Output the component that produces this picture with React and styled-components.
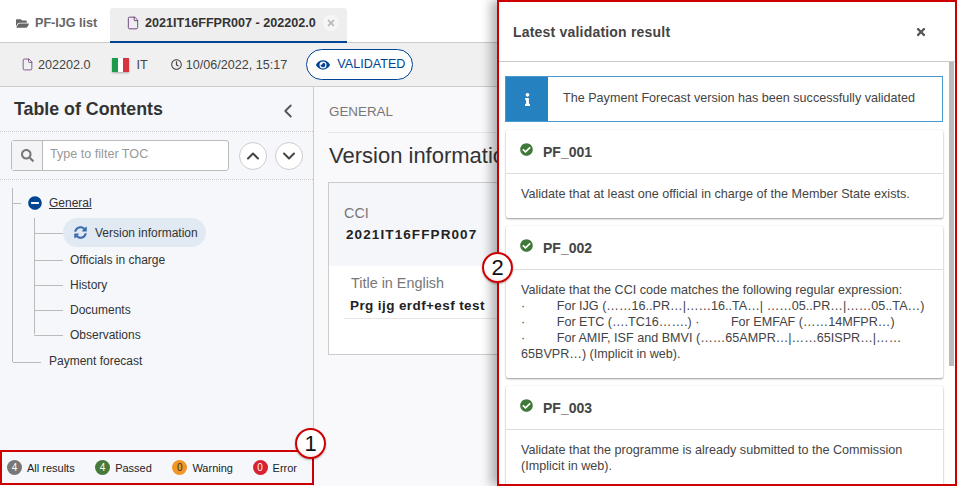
import React from "react";
import styled, { createGlobalStyle } from "styled-components";
import {
  FaFolderOpen,
  FaRegClock,
  FaEye,
  FaSearch,
  FaSyncAlt,
  FaMinusCircle,
  FaCheckCircle,
  FaInfo,
  FaTimes,
} from "react-icons/fa";
import { File, ChevronUp, ChevronDown, ChevronLeft } from "lucide-react";

const GlobalStyle = createGlobalStyle`
  html, body { margin: 0; padding: 0; background: #fff; }
  * { box-sizing: border-box; }
  body { font-family: "Liberation Sans", Arial, sans-serif; color: #333; }
`;

const Page = styled.div`
  position: relative;
  width: 957px;
  height: 486px;
  overflow: hidden;
  display: flex;
  flex-direction: column;
`;

const Tabs = styled.div`
  height: 43px;
  flex: none;
  display: flex;
  align-items: flex-end;
  padding-left: 16px;
  border-bottom: 1px solid #ccc;
`;

const ListTab = styled.div`
  display: flex;
  align-items: center;
  gap: 6px;
  height: 35px;
  width: 94px;
  padding-bottom: 3px;
  font-size: 12.6px;
  font-weight: 700;
  color: #666;
  svg { font-size: 13px; }
`;

const ActiveTab = styled.div`
  display: flex;
  align-items: center;
  width: 237px;
  height: 35px;
  padding: 0 7px 3px 16px;
  margin-bottom: -1px;
  background: #eee;
  border-bottom: 2px solid #004494;
  border-radius: 3px 3px 0 0;
  font-size: 12.6px;
  font-weight: 700;
  color: #333;
  white-space: nowrap;
  svg { color: #6a3b7a; margin-right: 5px; flex: none; }
`;

const TabClose = styled.span`
  width: 16px;
  height: 16px;
  margin-left: 7px;
  border-radius: 50%;
  background: #f6f6f6;
  display: flex;
  align-items: center;
  justify-content: center;
  svg { color: #bbb; font-size: 10px; margin: 0; }
`;

const Toolbar = styled.div`
  height: 44px;
  flex: none;
  display: flex;
  align-items: center;
  padding-left: 21px;
  background: #f0f0f0;
  border-bottom: 1px solid #ccc;
  font-size: 12.6px;
  color: #444;
`;

const Meta = styled.span`
  display: flex;
  align-items: center;
  gap: ${(p) => p.$gap || 4}px;
  margin-right: ${(p) => p.$after}px;
  svg { font-size: 11px; flex: none; }
`;

const Flag = styled.span`
  width: 17px;
  height: 14px;
  background: linear-gradient(90deg, #1e9a4b 0 33%, #fff 33% 66%, #d8343f 66%);
  box-shadow: 0 1px 2px rgba(0, 0, 0, 0.3);
`;

const StatusPill = styled.span`
  display: flex;
  align-items: center;
  gap: 7px;
  width: 107px;
  height: 31px;
  padding: 0 0 2px 9px;
  background: #fff;
  border: 1px solid #004494;
  border-radius: 16px;
  color: #004494;
  font-size: 12.6px;
  svg { font-size: 14px; margin-top: 3px; }
`;

const Main = styled.div`
  flex: 1;
  min-height: 0;
  display: flex;
`;

const Sidebar = styled.aside`
  width: 314px;
  flex: none;
  display: flex;
  flex-direction: column;
  background: #f6f7fb;
  border-right: 1px solid #ccc;
`;

const SidebarHead = styled.div`
  height: 45px;
  flex: none;
  display: flex;
  align-items: center;
  justify-content: space-between;
  padding: 0 14px;
  border-bottom: 1px dotted #ccc;
  h2 { margin: 0; font-size: 17.8px; font-weight: 700; color: #333; }
  svg { color: #555; margin-top: 4px; }
`;

const FilterRow = styled.div`
  height: 48px;
  flex: none;
  display: flex;
  align-items: center;
  padding-left: 11px;
  border-bottom: 1px dotted #ccc;
`;

const SearchBox = styled.div`
  width: 218px;
  height: 31px;
  display: flex;
  margin-right: 10px;
  background: #fff;
  border: 1px solid #bbb;
  border-radius: 3px;
`;

const SearchIcon = styled.span`
  width: 31px;
  display: flex;
  align-items: center;
  justify-content: center;
  background: #f4f4f6;
  border-right: 1px solid #bbb;
  svg { font-size: 13px; color: #777; }
`;

const SearchText = styled.span`
  padding-left: 7px;
  line-height: 27px;
  font-size: 12.6px;
  color: #999;
`;

const RoundButton = styled.span`
  width: 28px;
  height: 28px;
  margin-right: 8px;
  display: flex;
  align-items: center;
  justify-content: center;
  background: #fff;
  border: 1px solid #ccc;
  border-radius: 50%;
  svg { color: #444; }
`;

const Tree = styled.div`
  flex: 1;
  position: relative;
  padding: 8px 0 0 12px;
  font-size: 12px;
  color: #333;
`;

const TreeRoot = styled.div`
  border-left: 1px solid #bbb;
  height: 174px;
`;

const TreeRow = styled.div`
  position: relative;
  display: flex;
  align-items: center;
  height: ${(p) => p.$h || 25}px;
  padding-left: ${(p) => p.$pad}px;
  padding-bottom: ${(p) => p.$lift || 0}px;
  &::before {
    content: "";
    position: absolute;
    left: 0;
    top: 50%;
    width: ${(p) => p.$line}px;
    border-top: 1px solid #bbb;
  }
`;

const GeneralLink = styled.span`
  text-decoration: underline;
  margin-left: 7px;
`;

const GeneralIcon = styled(FaMinusCircle)`
  font-size: 14px;
  color: #004494;
`;

const SubTree = styled.div`
  position: relative;
  margin-left: 21px;
  height: 129px;
  &::after {
    content: "";
    position: absolute;
    left: 0;
    top: 0;
    bottom: 13px;
    border-left: 1px solid #bbb;
  }
`;

const ActivePill = styled.span`
  display: flex;
  align-items: center;
  gap: 8px;
  height: 29px;
  width: 143px;
  padding-left: 11px;
  background: #e1e9f3;
  border-radius: 15px;
  svg { font-size: 13px; color: #3d6cb0; }
`;

const Legend = styled.div`
  height: 35px;
  flex: none;
  display: flex;
  align-items: center;
  padding-left: 5px;
  margin: 0 -1px 1px 0;
  border: 2px solid #c00;
  font-size: 11px;
  color: #222;
`;

const LegendItem = styled.span`
  display: flex;
  align-items: center;
  gap: 5px;
  width: ${(p) => p.$w}px;
`;

const Count = styled.span`
  width: 15px;
  height: 15px;
  border-radius: 50%;
  background: ${(p) => p.$color};
  color: ${(p) => p.$text || "#fff"};
  display: flex;
  align-items: center;
  justify-content: center;
  font-size: 10px;
`;

const Content = styled.div`
  flex: 1;
  min-width: 0;
  overflow: hidden;
  padding: 0 0 0 14px;
  background: #f9f9fb;
`;

const Crumb = styled.div`
  width: 400px;
  height: 46px;
  padding: 17px 0 0 1px;
  border-bottom: 1px solid #e6e6e6;
  font-size: 13.4px;
  color: #777;
`;

const Heading = styled.h1`
  margin: 9px 0 0;
  padding-left: 1px;
  height: 40px;
  font-size: 22px;
  line-height: 28px;
  font-weight: 400;
  color: #333;
  white-space: nowrap;
`;

const InfoCard = styled.div`
  width: 400px;
  height: 173px;
  background: #fff;
  border: 1px solid #ccc;
`;

const CciBlock = styled.div`
  height: 83px;
  padding: 22px 0 0 15px;
  background: #f5f6fa;
`;

const FieldLabel = styled.div`
  padding-left: ${(p) => p.$pad || 0}px;
  font-size: 14.4px;
  line-height: 16px;
  color: #777;
`;

const FieldValue = styled.div`
  margin-top: ${(p) => p.$top}px;
  padding-left: ${(p) => p.$pad}px;
  font-size: 13.5px;
  line-height: 16px;
  font-weight: 700;
  letter-spacing: ${(p) => p.$spacing}px;
  color: #222;
`;

const TitleBlock = styled.div`
  margin-left: 15px;
  padding: 9px 0 5px 6px;
  height: 53px;
  border-bottom: 1px solid #e6e6e6;
`;

const Drawer = styled.section`
  position: absolute;
  top: 0;
  right: 0;
  bottom: 0;
  width: 460px;
  display: flex;
  flex-direction: column;
  background: #fff;
  border: 2px solid #c00;
  box-shadow: -6px 0 10px rgba(0, 0, 0, 0.3);
`;

const DrawerHead = styled.div`
  height: 60px;
  flex: none;
  display: flex;
  align-items: center;
  justify-content: space-between;
  padding: 0 28px 0 14px;
  border-bottom: 1px solid #ccc;
  h3 { margin: 0; font-size: 14px; font-weight: 700; letter-spacing: 0.2px; color: #444; }
  svg { font-size: 12px; color: #555; }
`;

const DrawerBody = styled.div`
  position: relative;
  flex: 1;
  min-height: 0;
  overflow: hidden;
  padding: 14px 12px 0 6px;
  display: flex;
  flex-direction: column;
  gap: 8px;
`;

const ScrollThumb = styled.div`
  position: absolute;
  top: 0;
  right: 1px;
  width: 5px;
  height: 304px;
  background: #bbb;
`;

const InfoBox = styled.div`
  display: flex;
  height: 46px;
  flex: none;
  border: 1px solid #4a9ad0;
  font-size: 12.6px;
  color: #444;
`;

const InfoIcon = styled.span`
  width: 42px;
  display: flex;
  align-items: center;
  justify-content: center;
  background: #2581bf;
  svg { color: #fff; font-size: 13px; }
`;

const InfoText = styled.span`
  padding-left: 15px;
  line-height: 42px;
`;

const Card = styled.article`
  flex: none;
  margin-left: 1px;
  background: #fff;
  border-radius: 2px;
  box-shadow: 0 1px 2px rgba(0, 0, 0, 0.4), 0 0 1px rgba(0, 0, 0, 0.12);
`;

const CardHead = styled.div`
  height: 44px;
  display: flex;
  align-items: center;
  gap: 10px;
  padding-left: 14px;
  border-bottom: 1px solid #ddd;
  font-size: 14px;
  font-weight: 700;
  color: #444;
  svg { font-size: 13px; color: #3f7a3b; margin-top: -4px; }
`;

const CardText = styled.div`
  padding: 12px 15px 16px;
  font-size: 12.6px;
  line-height: 16px;
  color: #444;
  white-space: pre-wrap;
`;

const Callout = styled.span`
  position: absolute;
  left: ${(p) => p.$x}px;
  top: ${(p) => p.$y}px;
  width: 31px;
  height: 31px;
  display: flex;
  align-items: center;
  justify-content: center;
  border: 2px solid #c00;
  border-radius: 50%;
  background: radial-gradient(circle at 50% 40%, #fff 60%, #f3c9c9);
  box-shadow: 0 1px 2px rgba(0, 0, 0, 0.3);
  font-size: 22px;
  color: #111;
`;

const checks = [
  {
    code: "PF_001",
    text: "Validate that at least one official in charge of the Member State exists.",
  },
  {
    code: "PF_002",
    text: "Validate that the CCI code matches the following regular expression:\n·         For IJG (……16..PR…|……16..TA…| ……05..PR…|……05..TA…)\n·         For ETC (….TC16…….) ·         For EMFAF (……14MFPR…)\n·         For AMIF, ISF and BMVI (……65AMPR…|……65ISPR…|……\n65BVPR…) (Implicit in web).",
  },
  {
    code: "PF_003",
    text: "Validate that the programme is already submitted to the Commission\n(Implicit in web).",
  },
];

const children = ["Officials in charge", "History", "Documents", "Observations"];

export default function App() {
  return (
    <Page>
      <GlobalStyle />
      <Tabs>
        <ListTab>
          <FaFolderOpen />
          PF-IJG list
        </ListTab>
        <ActiveTab>
          <File size={14} strokeWidth={1.6} />
          2021IT16FFPR007 - 202202.0
          <TabClose>
            <FaTimes />
          </TabClose>
        </ActiveTab>
      </Tabs>
      <Toolbar>
        <Meta $after={21}>
          <File size={13} strokeWidth={1.5} color="#6a3b7a" />
          202202.0
        </Meta>
        <Meta $after={23} $gap={8}>
          <Flag />
          IT
        </Meta>
        <Meta $after={19}>
          <FaRegClock />
          10/06/2022, 15:17
        </Meta>
        <StatusPill>
          <FaEye />
          VALIDATED
        </StatusPill>
      </Toolbar>
      <Main>
        <Sidebar>
          <SidebarHead>
            <h2>Table of Contents</h2>
            <ChevronLeft size={22} strokeWidth={2} />
          </SidebarHead>
          <FilterRow>
            <SearchBox>
              <SearchIcon>
                <FaSearch />
              </SearchIcon>
              <SearchText>Type to filter TOC</SearchText>
            </SearchBox>
            <RoundButton>
              <ChevronUp size={20} strokeWidth={2.4} />
            </RoundButton>
            <RoundButton>
              <ChevronDown size={20} strokeWidth={2.4} />
            </RoundButton>
          </FilterRow>
          <Tree>
            <TreeRoot>
              <TreeRow $h={30} $pad={15} $line={8}>
                <GeneralIcon />
                <GeneralLink>General</GeneralLink>
              </TreeRow>
              <SubTree>
                <TreeRow $h={29} $pad={29} $line={29}>
                  <ActivePill>
                    <FaSyncAlt />
                    Version information
                  </ActivePill>
                </TreeRow>
                {children.map((name) => (
                  <TreeRow key={name} $pad={36} $line={29}>
                    {name}
                  </TreeRow>
                ))}
              </SubTree>
              <TreeRow $h={30} $lift={2} $pad={36} $line={28}>
                Payment forecast
              </TreeRow>
            </TreeRoot>
          </Tree>
          <Legend>
            <LegendItem $w={89}>
              <Count $color="#777">4</Count>
              All results
            </LegendItem>
            <LegendItem $w={78}>
              <Count $color="#467a39">4</Count>
              Passed
            </LegendItem>
            <LegendItem $w={81}>
              <Count $color="#f29527" $text="#333">0</Count>
              Warning
            </LegendItem>
            <LegendItem $w={60}>
              <Count $color="#da2131">0</Count>
              Error
            </LegendItem>
          </Legend>
        </Sidebar>
        <Content>
          <Crumb>GENERAL</Crumb>
          <Heading>Version information</Heading>
          <InfoCard>
            <CciBlock>
              <FieldLabel>CCI</FieldLabel>
              <FieldValue $top={6} $pad={2} $spacing={1.1}>2021IT16FFPR007</FieldValue>
            </CciBlock>
            <TitleBlock>
              <FieldLabel $pad={1}>Title in English</FieldLabel>
              <FieldValue $top={7} $pad={0} $spacing={0.4}>Prg ijg erdf+esf test</FieldValue>
            </TitleBlock>
          </InfoCard>
        </Content>
      </Main>
      <Callout $x={295} $y={428}>1</Callout>
      <Drawer>
        <DrawerHead>
          <h3>Latest validation result</h3>
          <FaTimes />
        </DrawerHead>
        <DrawerBody>
          <ScrollThumb />
          <InfoBox>
            <InfoIcon>
              <FaInfo />
            </InfoIcon>
            <InfoText>The Payment Forecast version has been successfully validated</InfoText>
          </InfoBox>
          {checks.map((check) => (
            <Card key={check.code}>
              <CardHead>
                <FaCheckCircle />
                {check.code}
              </CardHead>
              <CardText>{check.text}</CardText>
            </Card>
          ))}
        </DrawerBody>
      </Drawer>
      <Callout $x={482} $y={252}>2</Callout>
    </Page>
  );
}
